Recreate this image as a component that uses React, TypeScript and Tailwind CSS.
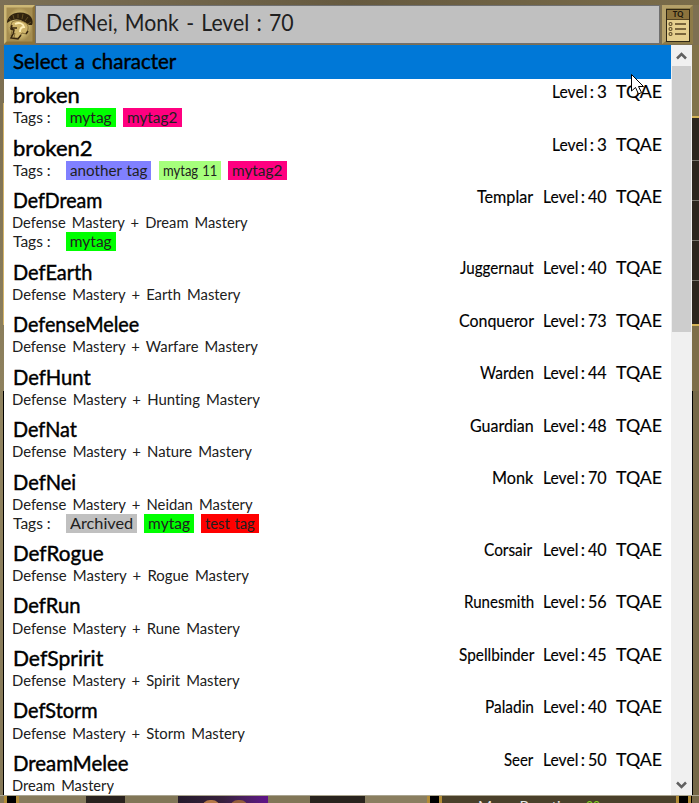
import { useLayoutEffect, useRef, useState } from "react";

function Fit({ text, w, className = "" }: { text: string; w: number; className?: string }) {
  const ref = useRef<HTMLSpanElement>(null);
  const [scale, setScale] = useState(1);
  useLayoutEffect(() => {
    const measure = () => {
      if (ref.current) setScale(w / ref.current.offsetWidth);
    };
    measure();
    document.fonts.ready.then(measure);
  }, [w, text]);
  return (
    <span className={"inline-block shrink-0 whitespace-pre " + className} style={{ width: w }}>
      <span ref={ref} className="inline-block origin-left" style={{ transform: `scaleX(${scale})` }}>
        {text}
      </span>
    </span>
  );
}

type Tag = { t: string; w: number; c: string };
type Row = { n: string; w: number; sub?: string; sw?: number; tags?: Tag[]; cls?: string; cw?: number; gap?: number; lv: number };

const green: Tag = { t: "mytag", w: 42, c: "bg-[#00ff00]" };
const pink: Tag = { t: "mytag2", w: 50.5, c: "bg-[#ff0080]" };

const rows: Row[] = [
  { n: "broken", w: 67, tags: [green, pink], lv: 3 },
  { n: "broken2", w: 80, tags: [{ t: "another tag", w: 77.5, c: "bg-[#8080ff]" }, { t: "mytag 11", w: 54.5, c: "bg-[#a6ff7c]" }, pink], lv: 3 },
  { n: "DefDream", w: 89, sub: "Defense Mastery + Dream Mastery", sw: 236, tags: [green], cls: "Templar", cw: 56, gap: 10, lv: 40 },
  { n: "DefEarth", w: 79, sub: "Defense Mastery + Earth Mastery", sw: 228, cls: "Juggernaut", cw: 74, gap: 9, lv: 40 },
  { n: "DefenseMelee", w: 126, sub: "Defense Mastery + Warfare Mastery", sw: 246, cls: "Conqueror", cw: 75, gap: 9, lv: 73 },
  { n: "DefHunt", w: 78, sub: "Defense Mastery + Hunting Mastery", sw: 248, cls: "Warden", cw: 54, gap: 9, lv: 44 },
  { n: "DefNat", w: 64, sub: "Defense Mastery + Nature Mastery", sw: 240, cls: "Guardian", cw: 64, gap: 9, lv: 48 },
  { n: "DefNei", w: 63, sub: "Defense Mastery + Neidan Mastery", sw: 241, tags: [{ t: "Archived", w: 63, c: "bg-[#c0c0c0]" }, green, { t: "test tag", w: 49.5, c: "bg-[#ff0000]" }], cls: "Monk", cw: 41, gap: 10, lv: 70 },
  { n: "DefRogue", w: 91, sub: "Defense Mastery + Rogue Mastery", sw: 237, cls: "Corsair", cw: 48, gap: 11, lv: 40 },
  { n: "DefRun", w: 68, sub: "Defense Mastery + Rune Mastery", sw: 228, cls: "Runesmith", cw: 70, gap: 9, lv: 56 },
  { n: "DefSpririt", w: 90, sub: "Defense Mastery + Spirit Mastery", sw: 228, cls: "Spellbinder", cw: 75, gap: 9, lv: 45 },
  { n: "DefStorm", w: 85, sub: "Defense Mastery + Storm Mastery", sw: 233, cls: "Paladin", cw: 49, gap: 9, lv: 40 },
  { n: "DreamMelee", w: 116, sub: "Dream Mastery", sw: 102, cls: "Seer", cw: 29, gap: 10, lv: 50 },
];

function Item({ r }: { r: Row }) {
  return (
    <div className={"flex shrink-0 justify-between pl-[9px] pr-[9px] " + (r.sub && r.tags ? "h-[71.3px]" : "h-[52.5px]")}>
      <div className="flex flex-col">
        <Fit text={r.n} w={r.w} className="mt-[2.3px] h-[27.2px] text-[22px] leading-[28px] [-webkit-text-stroke:0.45px_black]" />
        {r.sub && <Fit text={r.sub} w={r.sw!} className="-ml-px h-[19px] text-[15.5px] leading-[19px] text-[#202020] [word-spacing:2.5px]" />}
        {r.tags && (
          <div className="flex h-[19px] gap-[7.3px] text-[15.5px] leading-[19px] text-[#202020]">
            <Fit text="Tags :" w={38} className="mr-[7.5px]" />
            {r.tags.map((t) => (
              <div key={t.t} className={"flex h-[19px] px-1 " + t.c}>
                <Fit text={t.t} w={t.w} className="h-[19px] [word-spacing:1px]" />
              </div>
            ))}
          </div>
        )}
      </div>
      <div className="flex pt-[1px] text-[17px] leading-6 [-webkit-text-stroke:0.15px_black]">
        {r.cls && (
          <div className="flex" style={{ paddingRight: r.gap }}>
            <Fit text={r.cls} w={r.cw!} />
          </div>
        )}
        <Fit text="Level" w={35} />
        <span className="w-[10px] text-center">:</span>
        <Fit text={String(r.lv)} w={r.lv < 10 ? 10 : 19} className="mr-[9px]" />
        <Fit text="TQAE" w={46} />
      </div>
    </div>
  );
}

function Helmet() {
  return (
    <svg viewBox="0 0 31 39" className="h-[39px] w-[31px] shrink-0">
      <defs>
        <radialGradient id="gold">
          <stop offset="0" stopColor="#f0dfa0" />
          <stop offset="0.7" stopColor="#c9b36c" />
          <stop offset="1" stopColor="#a58d50" />
        </radialGradient>
      </defs>
      <rect width="31" height="39" fill="#8c7238" />
      <path d="M0 39V0H31L28 3H3V36Z" fill="#cdb876" />
      <rect x="2.500" y="2.500" width="26" height="34" fill="url(#gold)" />
      <path d="M3 18C3 14 6 10 10 8.500C17 6.500 24 8 27 12C29 15 29 18 28 20L25 20C24 19 22 18 20 17C15 13 8 14 3 18Z" fill="#30230e" />
      <path d="M5 13l2 3M9 10l1 4M14 9v4M19 9l-1 5M24 12l-3 4M27 17l-3 2" stroke="#7b642c" strokeWidth="0.700" />
      <path d="M8 17C13 14 20 16 23 19C25 22 24 26 22 29L18 28L15 33L10 33L11 28L7 31L8 25L6 23Z" fill="#cfb56b" stroke="#6b5425" strokeWidth="0.700" />
      <path d="M11 19C15 17 19 18 20 22C17 22 16 24 16 27" fill="none" stroke="#fff0ba" strokeWidth="1.800" />
      <path d="M8 20L7 24l3 1-1 4-2 4 7 1 3-4M8 23l5 0M22 29l2-3" fill="none" stroke="#382710" strokeWidth="1.500" />
    </svg>
  );
}

function ListButton() {
  return (
    <svg viewBox="0 0 31 39" className="h-[39px] w-[31px]">
      <rect width="31" height="39" fill="#8d7b48" />
      <path d="M0 39V0H31L28 3H4V36Z" fill="#b5a16a" />
      <rect x="4.500" y="4.500" width="23" height="32" fill="#e5cf8e" stroke="#2e2614" />
      <rect x="5" y="5" width="22" height="9" fill="#8c733c" />
      <path d="M5 14.500H27" stroke="#554422" />
      <text x="16" y="12" textAnchor="middle" fontSize="7.5" fontWeight="900" fill="#20180b">TQ</text>
      {[19, 24, 29].map((y) => (
        <g key={y} fill="none" stroke="#5d4b28" strokeWidth="1.100">
          <circle cx="8.500" cy={y} r="1.500" />
          <path d={`M13 ${y}H24`} strokeWidth="1.600" />
        </g>
      ))}
    </svg>
  );
}

function Pillar() {
  return <div className="w-[15px] shrink-0 border-x-[3px] border-[#b28c37] bg-black" />;
}

function Footer() {
  return (
    <div className="flex h-2 shrink-0 overflow-hidden border-t border-[#aaa590]">
      <div className="w-1 shrink-0 bg-[#857857]" />
      <Pillar />
      <div className="w-[67px] shrink-0 bg-[#877b5d]" />
      <div className="w-[39px] shrink-0 bg-[#29221e]" />
      <div className="w-[53px] shrink-0 bg-[#817657]" />
      <div className="flex w-[90px] shrink-0 gap-[10px] bg-gradient-to-r from-[#251a2b] via-[#37203c] to-[#60118a] pl-[24px] pt-[4px]">
        <div className="h-2 w-[18px] rounded-t-full bg-[#b57948]" />
        <div className="h-2 w-[18px] rounded-t-full bg-[#95603c]" />
      </div>
      <div className="w-[42px] shrink-0 bg-[#817657]" />
      <div className="w-[55px] shrink-0 bg-[#29231d]" />
      <div className="w-[62px] shrink-0 bg-[#8a7e60]" />
      <Pillar />
      <div className="w-[234px] shrink-0 bg-[#4a402a] pl-[36px] pt-[3px] text-[13px] leading-[15px] text-[#e8e8e8]">
        <Fit text="Mana Reaction: " w={108} />
        <Fit text="20" w={14} className="text-[#85d022]" />
      </div>
      <Pillar />
      <div className="grow border-l border-black bg-[#756848]" />
    </div>
  );
}

export default function App() {
  return (
    <div className="relative flex h-[803px] w-[699px] flex-col overflow-hidden bg-[#7d7052] font-[Lato,sans-serif] text-black [font-variant-ligatures:none]">
      <div className="h-[5px] shrink-0 bg-gradient-to-r from-[#7c7056] via-[#665a40] to-[#7a6c4a]" />
      <div className="flex h-[40px] shrink-0 pl-1">
        <Helmet />
        <div className="flex h-[39px] w-[625px] items-center border border-[#6f6f6f] bg-[#c0c0c0] pl-[10px] pb-[5px] text-[24px] leading-8 text-[#202020]">
          <Fit text="DefNei, Monk - Level : 70" w={248} className="[word-spacing:2px]" />
        </div>
        <div className="ml-[2px]"><ListButton /></div>
      </div>
      <div className="flex h-[750px] shrink-0">
        <div className="flex w-1 shrink-0 flex-col bg-gradient-to-b from-[#7a6d50] via-[#90835f] to-[#857857]">
          <div className="h-[58px]" />
          <div className="h-[222px] border-r border-[#d5b56c]" />
          <div className="h-[66px]" />
          <div className="grow border-r border-black" />
        </div>
        <div className="flex w-[667px] shrink-0 flex-col overflow-hidden bg-white">
          <div className="h-[34px] shrink-0 bg-[#0078d7] pl-[9px] pt-[2px] text-[22px] leading-[28px] [-webkit-text-stroke:0.45px_black]">
            <Fit text="Select a character" w={163} className="[word-spacing:2px]" />
          </div>
          {rows.map((r) => <Item key={r.n} r={r} />)}
        </div>
        <div className="flex w-[21px] shrink-0 flex-col items-center bg-[#f0f0f0]">
          <svg className="h-[21px] w-[21px]" viewBox="0 0 21 21"><path d="M6 13.500L10.500 9L15 13.500" fill="none" stroke="#606060" strokeWidth="2.500" /></svg>
          <div className="h-[266px] w-[19px] bg-[#cdcdcd]" />
          <div className="grow" />
          <svg className="h-[21px] w-[21px]" viewBox="0 0 21 21"><path d="M6 8.500L10.500 13L15 8.500" fill="none" stroke="#606060" strokeWidth="2.500" /></svg>
        </div>
        <div className="flex w-[7px] shrink-0 flex-col">
          <div className="h-[71px] bg-[#81734b]" />
          <div className="h-[2px] bg-[#d5b458]" />
          <div className="h-[43px] border-b border-[#77736b] bg-[#2c261e]" />
          <div className="h-[40px] border-b border-[#77736b] bg-[#2c261e]" />
          <div className="h-[40px] border-b border-[#77736b] bg-[#2c261e]" />
          <div className="h-[40px] border-b border-[#77736b] bg-[#2c261e]" />
          <div className="h-[43px] bg-[#2c261e]" />
          <div className="h-[2px] bg-[#d5b458]" />
          <div className="h-[65px] bg-[#7d6e49]" />
          <div className="grow border-l border-black bg-[#756848]" />
        </div>
      </div>
      <Footer />
      <svg className="absolute left-[630px] top-[73px] h-[24px] w-[16px]" viewBox="0 0 16 24">
        <path d="M1.500 1.500V18L5.500 14.500L8.500 21L11.500 19.500L8.500 13.500H13.500Z" fill="white" stroke="black" />
      </svg>
    </div>
  );
}
